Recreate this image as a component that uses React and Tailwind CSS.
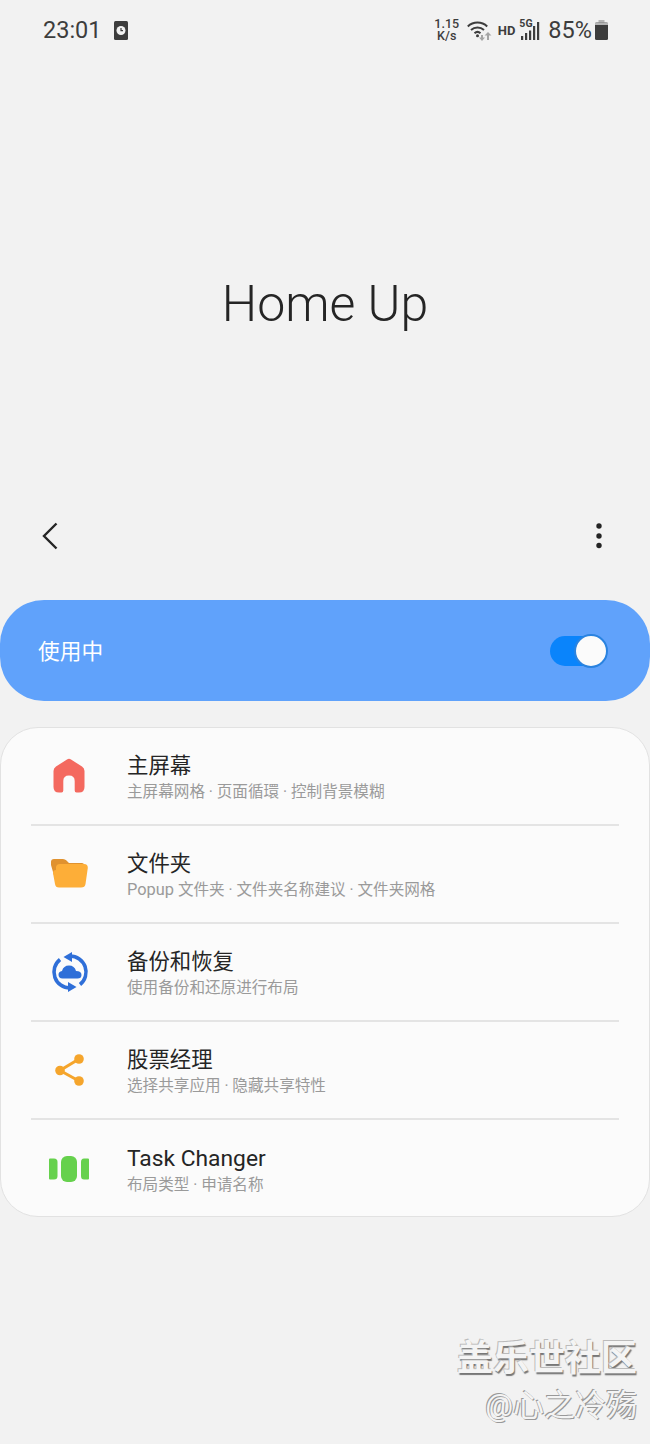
const cjk = { fontFamily: 'Roboto, "Noto Sans CJK SC", sans-serif' };

function Home() {
  return (
    <svg width="34" height="36" viewBox="0 0 34 36" className="-ml-[2px]">
      <path fillRule="evenodd" fill="#f4695f" d="M15 1.500 Q17 0.200 19 1.500 L30 8.500 Q32.500 10 32.500 13 V29 Q32.500 34.500 27 34.500 H24.500 Q22.700 34.500 22.700 32.500 V23 Q22.700 17.500 17 17.500 Q11.300 17.500 11.300 23 V32.500 Q11.300 34.500 9.500 34.500 H7 Q1.500 34.500 1.500 29 V13 Q1.500 10 4 8.500 Z" />
    </svg>
  );
}
function Folder() {
  return (
    <svg width="38" height="30" viewBox="0 0 38 30" className="-ml-[2px]">
      <path fill="#e0922f" d="M1 3 Q1 0 4 0 H13 Q15 0 16.500 1.500 L19 4 H32 Q34 4 34 6 V20 H5 L1 6 Z" />
      <path fill="#fdae38" d="M6 8 Q6.500 5 10 5 H34 Q38 5 37.800 9 L35.500 25 Q35 28.500 31 28.500 H9 Q5.500 28.500 5 25 L3 14 Q3 11 6 11 Z" />
    </svg>
  );
}
function Sync() {
  return (
    <svg width="38" height="40" viewBox="0 0 38 40">
      <path fill="none" stroke="#2f6fd8" strokeWidth="3.600" d="M19 4 A16 16 0 0 1 29 32.500" />
      <path fill="none" stroke="#2f6fd8" strokeWidth="3.600" d="M19 36 A16 16 0 0 1 9 7.500" />
      <path fill="#2f6fd8" d="M12.500 5 L21 0 L21 10 Z" />
      <path fill="#2f6fd8" d="M25.500 35 L17 40 L17 30 Z" />
      <path fill="#2f6fd8" d="M11.500 26.500 Q7.500 26.500 7.500 22.800 Q7.500 19.500 11 19 Q12.500 13.500 18 13.500 Q23.500 13.500 25 19 Q30.500 19 30.500 23 Q30.500 26.500 26.500 26.500 Z" />
    </svg>
  );
}
function Share() {
  return (
    <svg width="32" height="34" viewBox="0 0 32 34">
      <path fill="none" stroke="#f5a52c" strokeWidth="3" d="M25 6 L6 17.500 L25 28" />
      <circle cx="25" cy="6" r="4.800" fill="#f5a52c" />
      <circle cx="6" cy="17.500" r="4.800" fill="#f5a52c" />
      <circle cx="25" cy="28" r="4.800" fill="#f5a52c" />
    </svg>
  );
}
function Task() {
  return (
    <svg width="40" height="26" viewBox="0 0 40 26" className="-ml-[2px]">
      <rect x="12" y="0" width="16" height="26" rx="6" fill="#66d14d" />
      <path fill="#66d14d" d="M1 2.500 H5 Q8.500 2.500 8.500 6 V20 Q8.500 23.500 5 23.500 H1 Q0 23.500 0 22.500 V3.500 Q0 2.500 1 2.500 Z" />
      <path fill="#66d14d" d="M39 2.500 H35 Q32 2.500 32 6 V20 Q32 23.500 35 23.500 H39 Q40 23.500 40 22.500 V3.500 Q40 2.500 39 2.500 Z" />
    </svg>
  );
}

const rows = [
  { icon: <Home />, title: <span>主屏幕</span>, sub: '主屏幕网格 · 页面循環 · 控制背景模糊' },
  { icon: <Folder />, title: <span>文件夹</span>, sub: <><span className="text-[16.4px]">Popup</span> 文件夹 · 文件夹名称建议 · 文件夹网格</> },
  { icon: <Sync />, title: <span>备份和恢复</span>, sub: '使用备份和还原进行布局' },
  { icon: <Share />, title: <span>股票经理</span>, sub: '选择共享应用 · 隐藏共享特性' },
  { icon: <Task />, title: <span className="text-[22.800px]">Task Changer</span>, sub: '布局类型 · 申请名称' },
];

function StatusBar() {
  return (
    <div className="h-[60px] flex items-center pl-[43px] pr-[42px] text-[#3d3d3d]">
      <span className="text-[23.500px] leading-none pt-[2px]">23:01</span>
      <svg className="ml-[12px]" width="14" height="19" viewBox="0 0 14 19">
        <rect width="14" height="19" rx="1.500" fill="#3d3d3d" />
        <circle cx="7" cy="9.500" r="4.500" fill="#f2f2f2" />
        <path d="M7 7 V9.700 H9 " stroke="#3d3d3d" strokeWidth="1.200" fill="none" />
      </svg>
      <div className="flex-1" />
      <div className="flex flex-col items-center text-[12.500px] leading-[12px] font-medium w-[26px]">
        <span>1.15</span>
        <span>K/s</span>
      </div>
      <svg className="ml-[7px]" width="25" height="22" viewBox="0 0 25 22">
        <path d="M0.800 7.500 A14 14 0 0 1 20.200 7.500" stroke="#3d3d3d" strokeWidth="2" fill="none" />
        <path d="M4 11 A9.500 9.500 0 0 1 17 11" stroke="#3d3d3d" strokeWidth="2" fill="none" />
        <path d="M7.500 14.200 A4.500 4.500 0 0 1 13.500 14.200" stroke="#3d3d3d" strokeWidth="2" fill="none" />
        <circle cx="10.500" cy="16.800" r="1.500" fill="#3d3d3d" />
        <path d="M14 16 H16 V18.500 H18 L15 22 L12 18.500 H14 Z" fill="#a5a5a5" />
        <path d="M20 21 H22 V16.500 H24.500 L21 13 L17.500 16.500 H20 Z" fill="#a5a5a5" />
      </svg>
      <span className="ml-[6px] text-[13px] font-bold leading-none">HD</span>
      <div className="ml-[4px] relative w-[23px] h-[22px]">
        <span className="absolute left-0 top-0 text-[10.500px] font-bold leading-none">5G</span>
        <svg className="absolute left-0 top-0" width="23" height="22" viewBox="0 0 23 22">
          <rect x="2" y="17" width="2.200" height="4" fill="#3d3d3d" />
          <rect x="6" y="14" width="2.200" height="7" fill="#3d3d3d" />
          <rect x="10" y="11.500" width="2.200" height="9.500" fill="#3d3d3d" />
          <rect x="14" y="7" width="2.200" height="14" fill="#3d3d3d" />
          <rect x="18" y="3" width="2.200" height="18" fill="#3d3d3d" />
        </svg>
      </div>
      <span className="ml-[6px] text-[23.500px] leading-none pt-[2px]">85%</span>
      <svg className="ml-[3px]" width="13" height="20" viewBox="0 0 13 20">
        <rect x="3.500" y="0" width="6" height="3" fill="#b5b5b5" />
        <rect x="0" y="2.500" width="13" height="17.500" rx="1.500" fill="#3d3d3d" />
        <rect x="0" y="2.500" width="13" height="2.500" fill="#b5b5b5" />
      </svg>
    </div>
  );
}

export default function App() {
  return (
    <div className="relative w-[650px] h-[1444px] bg-[#f2f2f2] overflow-hidden" style={cjk}>
      <StatusBar />
      <div className="h-[450px] flex items-start justify-center pt-[210px]">
        <h1 className="text-[50px] leading-[68px] font-light text-[#252525]">Home Up</h1>
      </div>
      <div className="h-[90px] flex items-start justify-between pl-[41px] pr-[48px] pt-[10px]">
        <svg width="18" height="32" viewBox="0 0 18 32">
          <path d="M15.500 3.500 L3 16 L15.500 28.500" stroke="#252525" strokeWidth="2.400" fill="none" />
        </svg>
        <svg width="6" height="26" viewBox="0 0 6 26" className="mt-[3px]">
          <circle cx="3" cy="3" r="2.700" fill="#252525" />
          <circle cx="3" cy="13" r="2.700" fill="#252525" />
          <circle cx="3" cy="22.500" r="2.700" fill="#252525" />
        </svg>
      </div>
      <div className="h-[101px] rounded-[44px] bg-[#60a2fb] flex items-center justify-between pl-[38px] pr-[42px]">
        <span className="text-[21.700px] leading-[32px] pt-[2px] text-white">使用中</span>
        <div className="relative w-[58px] h-[34px]">
          <div className="absolute left-0 top-[2px] w-[56px] h-[30px] rounded-full bg-[#0a84fb]" />
          <div className="absolute right-0 top-0 w-[34px] h-[34px] rounded-full bg-[#fbfbfb] border-2 border-[#2a83e0]" />
        </div>
      </div>
      <div className="mt-[26px] h-[490px] rounded-[38px] bg-[#fbfbfb] border border-[#e2e2e2] flex flex-col px-[30px]">
        {rows.map((r, i) => (
          <div key={i} className={`h-[98px] shrink-0 flex items-center ${i < 4 ? 'border-b-2 border-[#e4e4e4]' : ''}`}>
            <div className="w-[78px] flex justify-center shrink-0">{r.icon}</div>
            <div className="ml-[18px] flex flex-col pt-[3px]">
              <span className="text-[21.400px] leading-[28px] text-[#252525]">{r.title}</span>
              <span className="text-[15.600px] leading-[24px] text-[#9a9a9a]">{r.sub}</span>
            </div>
          </div>
        ))}
      </div>
      <div className="absolute right-[13px] top-[1336px] flex flex-col items-end">
        <span className="text-[36px] leading-[46px] font-bold text-[#f4f4f4] [text-shadow:-1px_-1px_0_#bbb,1px_2px_1px_#777]">盖乐世社区</span>
        <span className="text-[31px] leading-[48px] text-[#f4f4f4] [text-shadow:-1px_-1px_0_#999,1px_1px_0_#999]">@心之冷殇</span>
      </div>
    </div>
  );
}
